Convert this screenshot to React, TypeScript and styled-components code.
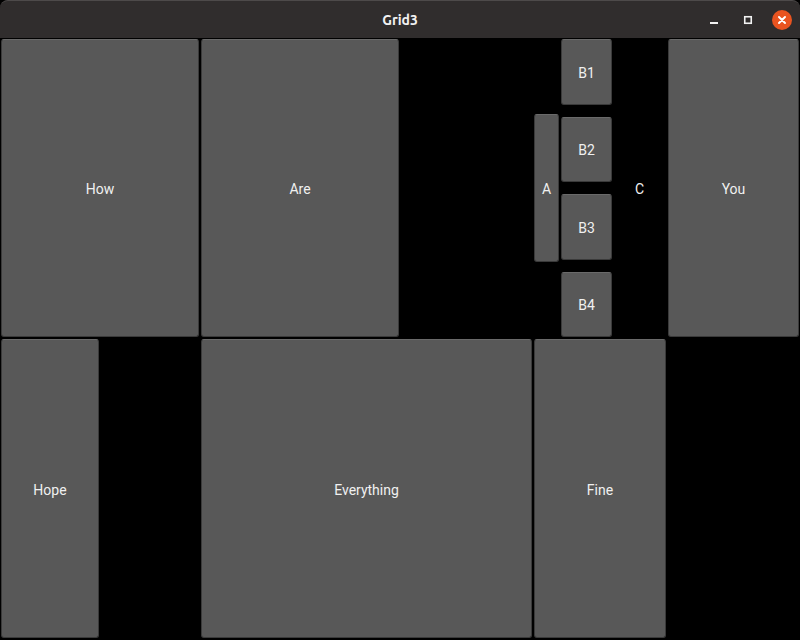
import { createGlobalStyle, styled } from "styled-components";

const GlobalStyle = createGlobalStyle`
  html, body {
    margin: 0;
    padding: 0;
    background: #000;
    overflow: hidden;
  }
  #root {
    width: 800px;
    height: 640px;
  }
`;

const Window = styled.div`
  width: 800px;
  height: 640px;
  display: flex;
  flex-direction: column;
  background: #000;
  font-family: Roboto, "Noto Sans", sans-serif;
`;

const TitleBar = styled.div`
  height: 38px;
  flex: none;
  display: flex;
  align-items: center;
  justify-content: center;
  position: relative;
  background: #302d2d;
  border-top: 1px solid #4d4a4a;
  border-radius: 8px 8px 0 0;
  box-sizing: border-box;
  color: #f2f2f2;
  font-family: Ubuntu, "Noto Sans", sans-serif;
  font-weight: bold;
  font-size: 14px;
`;

const Controls = styled.div`
  position: absolute;
  right: 8px;
  top: 0;
  bottom: 0;
  display: flex;
  align-items: center;
  gap: 14px;
`;

const Control = styled.div<{ $close?: boolean }>`
  width: 20px;
  height: 20px;
  border-radius: 50%;
  display: flex;
  align-items: center;
  justify-content: center;
  background: ${(p) => (p.$close ? "#e95420" : "transparent")};
`;

const Grid = styled.div`
  flex: 1;
  display: grid;
  grid-template-columns: 100px 100px 200px 133px 134px 133px;
  grid-template-rows: 300px 301px;
`;

const Button = styled.div<{ $col?: string; $row?: string }>`
  grid-column: ${(p) => p.$col ?? "auto"};
  grid-row: ${(p) => p.$row ?? "auto"};
  margin: 1px;
  padding-top: 2px;
  display: flex;
  align-items: center;
  justify-content: center;
  background: #585858;
  border: 1px solid #3a3a3a;
  border-top-color: #6a6a6a;
  border-radius: 3px;
  box-sizing: border-box;
  color: #f0f0f0;
  font-size: 14px;
`;

const Nested = styled.div`
  grid-column: 5;
  grid-row: 1;
  display: flex;
  align-items: stretch;
  padding: 1px 0 1px 0;
`;

const SideButton = styled(Button)`
  width: 25px;
  height: 148px;
  align-self: center;
  margin: 0 2px 0 1px;
`;

const Stack = styled.div`
  width: 51px;
  display: flex;
  flex-direction: column;
  gap: 12px;
`;

const StackButton = styled(Button)`
  flex: 1;
  margin: 0;
`;

const Label = styled.div`
  flex: 1;
  padding-top: 2px;
  display: flex;
  align-items: center;
  justify-content: center;
  color: #f0f0f0;
  font-size: 14px;
`;

export default function App() {
  return (
    <Window>
      <GlobalStyle />
      <TitleBar>
        Grid3
        <Controls>
          <Control>
            <svg width="10" height="10" viewBox="0 0 10 10">
              <rect x="1" y="7" width="8" height="2" fill="#f2f2f2" />
            </svg>
          </Control>
          <Control>
            <svg width="10" height="10" viewBox="0 0 10 10">
              <rect x="1.75" y="1.75" width="6.5" height="6.5" fill="none" stroke="#f2f2f2" strokeWidth="1.6" />
            </svg>
          </Control>
          <Control $close>
            <svg width="10" height="10" viewBox="0 0 10 10">
              <path d="M2 2 L8 8 M8 2 L2 8" stroke="#fff" strokeWidth="2" strokeLinecap="round" />
            </svg>
          </Control>
        </Controls>
      </TitleBar>
      <Grid>
        <Button $col="1 / 3" $row="1">How</Button>
        <Button $col="3" $row="1">Are</Button>
        <Nested>
          <SideButton>A</SideButton>
          <Stack>
            <StackButton>B1</StackButton>
            <StackButton>B2</StackButton>
            <StackButton>B3</StackButton>
            <StackButton>B4</StackButton>
          </Stack>
          <Label>C</Label>
        </Nested>
        <Button $col="6" $row="1">You</Button>
        <Button $col="1" $row="2">Hope</Button>
        <Button $col="3 / 5" $row="2">Everything</Button>
        <Button $col="5" $row="2">Fine</Button>
      </Grid>
    </Window>
  );
}
